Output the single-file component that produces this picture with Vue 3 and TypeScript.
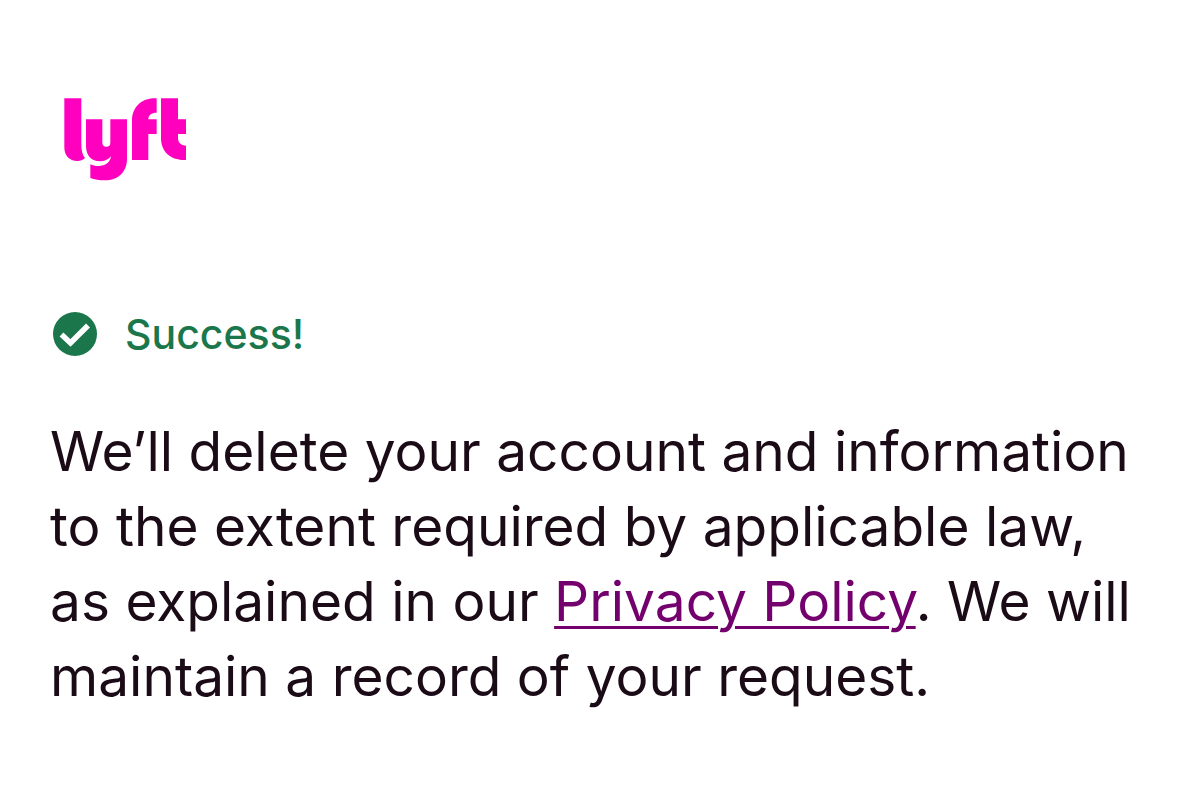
<script setup lang="ts">
const privacyHref = '#privacy-policy'
</script>

<template>
  <main class="page">
    <svg class="logo" viewBox="42 39 366 249" role="img" aria-label="Lyft">
      <path d="M43 40H94V176C94 196 97 210 105 219C99 225 91 228 82 228C58 228 43 212 43 187Z" />
      <path d="M108 103H157V173A12 12 0 0 0 181 173V103H231V222C231 260 205 286 165 286C148 286 133 283 121 279V238C129 242 139 244 149 243C169 241 181 231 183 214C175 224 163 229 150 229C124 229 108 211 108 183Z" />
      <path d="M246 225V107C246 67 274 40 314 40H320V83C304 83 295 90 295 103H320V147H295V225Z" />
      <path d="M333 40H384V103H408V147H384V160C384 173 394 182 408 182V225H402C360 225 333 199 333 159Z" />
    </svg>

    <div class="status" role="status">
      <svg class="check" viewBox="0 0 44 44" aria-hidden="true">
        <circle cx="22" cy="22" r="22" />
        <path d="M8.5 22.5L17.5 31L35 13.5" />
      </svg>
      <strong class="label">Success!</strong>
    </div>

    <p class="message">
      We’ll delete your account and information to the extent required by applicable law,
      as explained in our <a :href="privacyHref">Privacy Policy</a>. We will maintain a record of your request.
    </p>
  </main>
</template>

<style>
body {
  margin: 0;
  background: #fff;
}
</style>

<style scoped>
.page {
  padding: 98px 50px 88px;
  font-family: Inter, "Noto Sans", sans-serif;
  color: #1a0b17;
}

.logo {
  display: block;
  width: 122px;
  height: 83px;
  margin-left: 14px;
  fill: #ff00bf;
}

.status {
  display: flex;
  align-items: center;
  gap: 28px;
  margin: 123px 0 0 3px;
  line-height: 60px;
  color: #1b774b;
}

.check {
  width: 44px;
  height: 44px;
}

.check circle {
  fill: #1b774b;
}

.check path {
  fill: none;
  stroke: #fff;
  stroke-width: 5.5;
}

.label {
  font-size: 41px;
  font-weight: 500;
}

.message {
  margin: 50px 0 0;
  font-size: 55px;
  line-height: 75px;
}

.message a {
  color: #73006d;
  text-decoration-thickness: 3px;
  text-underline-offset: 5px;
}
</style>
